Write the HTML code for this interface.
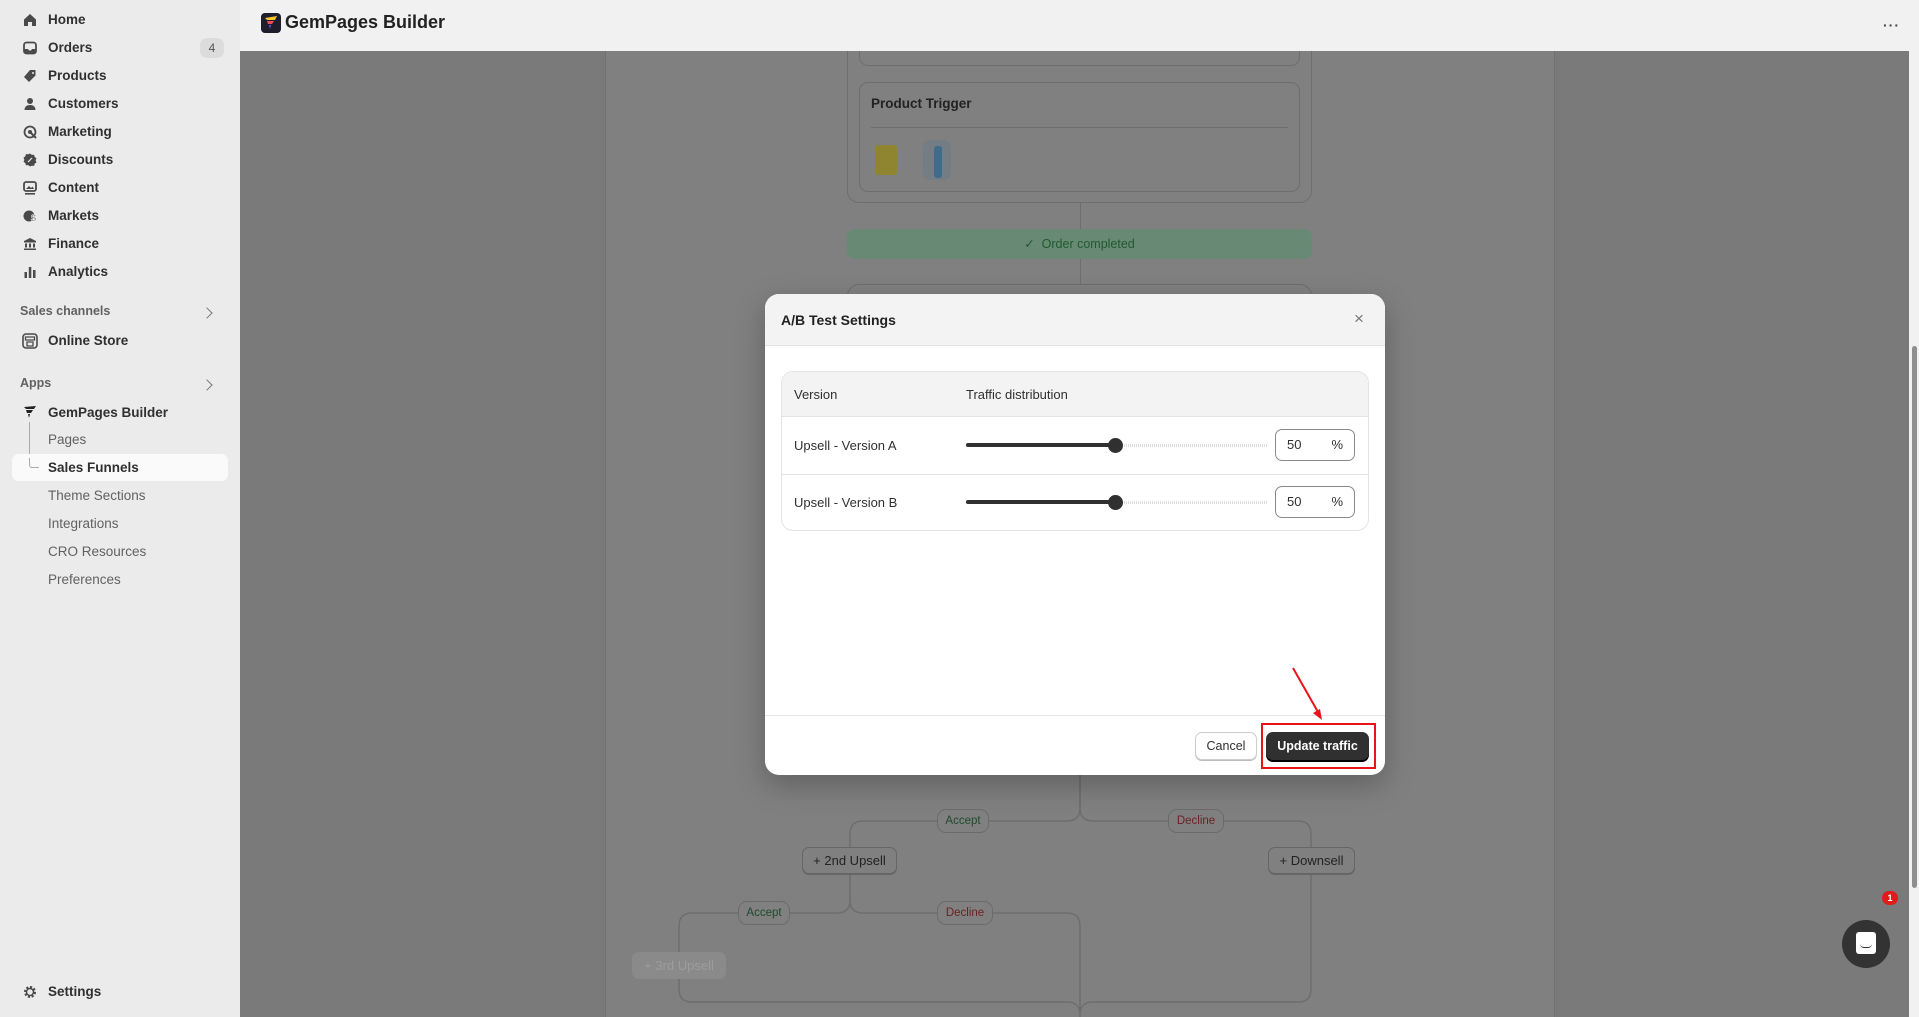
<!DOCTYPE html>
<html><head><meta charset="utf-8"><style>
*{box-sizing:border-box;margin:0;padding:0}
body{width:1919px;height:1017px;overflow:hidden;position:relative;font-family:"Liberation Sans",sans-serif;background:#7a7a7a;color:#303030}
.sb{position:absolute;left:0;top:0;width:240px;height:1017px;background:#ebebeb;z-index:5}
.it{position:absolute;left:48px;font-size:13.5px;font-weight:600;color:#303030;line-height:16px}
.sub{font-weight:500;color:#616161}
.ic{position:absolute;left:23px;width:14px;height:14px}
.sec{position:absolute;left:20px;font-size:12.5px;font-weight:600;color:#616161}
.chev{position:absolute;left:203px;width:8px;height:8px;border-right:1.5px solid #777;border-top:1.5px solid #777;transform:rotate(45deg)}
.hd{position:absolute;left:240px;top:0;width:1679px;height:51px;background:#f1f1f1;z-index:5}
.abs{position:absolute}
.pill{position:absolute;height:24px;border:1px solid #6b6b6b;border-radius:9px;background:#808080;font-size:11.5px;display:flex;align-items:center;justify-content:center}
.btn{position:absolute;height:27px;border:1px solid #666;border-radius:7px;background:#808080;font-size:13px;display:flex;align-items:center;justify-content:center;color:#222;box-shadow:0 1px 0 #666}
.modal{position:absolute;left:765px;top:294px;width:620px;height:481px;background:#fff;border-radius:14px;overflow:hidden;box-shadow:0 10px 30px rgba(0,0,0,.25);z-index:6}
</style></head><body>
<div class="sb">
<svg class="ic" style="top:13px" viewBox="0 0 14 14"><path d="M1 6.5L7 1l6 5.5V13H9V9H5v4H1z" fill="#4a4a4a"/></svg>
<div class="it" style="top:12px">Home</div>
<svg class="ic" style="top:41px" viewBox="0 0 14 14"><rect x="1" y="1.5" width="12" height="11" rx="2.5" fill="none" stroke="#4a4a4a" stroke-width="1.8"/><path d="M1.5 8h3.5l1 1.5h2L9 8h3.5v4h-11z" fill="#4a4a4a"/></svg>
<div class="it" style="top:40px">Orders</div>
<div class="abs" style="left:200px;top:38px;width:24px;height:20px;border-radius:7px;background:#dcdcdc;font-size:12px;color:#555;text-align:center;line-height:20px">4</div>
<svg class="ic" style="top:69px" viewBox="0 0 14 14"><path d="M7 1h5.5v5.5L6 13 1 8z" fill="#4a4a4a"/><circle cx="10" cy="4" r="1" fill="#ebebeb"/></svg>
<div class="it" style="top:68px">Products</div>
<svg class="ic" style="top:97px" viewBox="0 0 14 14"><circle cx="7" cy="4" r="3" fill="#4a4a4a"/><path d="M1.5 13c0-3.5 2.5-5 5.5-5s5.5 1.5 5.5 5z" fill="#4a4a4a"/></svg>
<div class="it" style="top:96px">Customers</div>
<svg class="ic" style="top:125px" viewBox="0 0 14 14"><circle cx="7" cy="7" r="5.5" fill="none" stroke="#4a4a4a" stroke-width="1.8"/><circle cx="7" cy="7" r="2" fill="#4a4a4a"/><path d="M8 8l5 5" stroke="#4a4a4a" stroke-width="2"/></svg>
<div class="it" style="top:124px">Marketing</div>
<svg class="ic" style="top:153px" viewBox="0 0 14 14"><path d="M7 .5l1.8 1.4 2.3-.2.5 2.2 1.9 1.3-.9 2.1.9 2.1-1.9 1.3-.5 2.2-2.3-.2L7 13.5 5.2 12.1l-2.3.2-.5-2.2L.5 8.8 1.4 6.7.5 4.6l1.9-1.3.5-2.2 2.3.2z" fill="#4a4a4a"/><path d="M5 9l4-4" stroke="#ebebeb" stroke-width="1.2"/></svg>
<div class="it" style="top:152px">Discounts</div>
<svg class="ic" style="top:181px" viewBox="0 0 14 14"><rect x="1" y="1" width="12" height="9" rx="2" fill="none" stroke="#4a4a4a" stroke-width="1.8"/><path d="M3 8l3-3 2 2 1.5-1.5L11 8z" fill="#4a4a4a"/><rect x="2" y="12" width="10" height="1.6" fill="#4a4a4a"/></svg>
<div class="it" style="top:180px">Content</div>
<svg class="ic" style="top:209px" viewBox="0 0 14 14"><circle cx="6" cy="7" r="5.5" fill="#4a4a4a"/><text x="8" y="12" font-size="9" fill="#4a4a4a" font-weight="bold" stroke="#ebebeb" stroke-width=".6">$</text></svg>
<div class="it" style="top:208px">Markets</div>
<svg class="ic" style="top:237px" viewBox="0 0 14 14"><path d="M7 1l6 3v1.5H1V4z M2 6.5h2v4H2z M6 6.5h2v4H6z M10 6.5h2v4h-2z M1 11.5h12V13H1z" fill="#4a4a4a"/></svg>
<div class="it" style="top:236px">Finance</div>
<svg class="ic" style="top:265px" viewBox="0 0 14 14"><rect x="1.5" y="7" width="2.5" height="6" fill="#4a4a4a"/><rect x="5.8" y="2" width="2.5" height="11" fill="#4a4a4a"/><rect x="10" y="5" width="2.5" height="8" fill="#4a4a4a"/></svg>
<div class="it" style="top:264px">Analytics</div>
<div class="sec" style="top:304px">Sales channels</div><div class="chev" style="top:309px"></div>
<svg class="ic" style="top:333px;width:16px;height:16px;left:22px" viewBox="0 0 16 16"><rect x="1" y="1" width="14" height="14" rx="3" fill="none" stroke="#4a4a4a" stroke-width="1.6"/><path d="M3.5 4h9v3h-9z M5 9h6v4H5z" fill="none" stroke="#4a4a4a" stroke-width="1.3"/></svg>
<div class="it" style="top:333px">Online Store</div>
<div class="sec" style="top:376px">Apps</div><div class="chev" style="top:381px"></div>
<svg class="ic" style="top:405px" viewBox="0 0 14 14"><path d="M1 2l12-1-2 3H3z M3 5h7l-2 3H4z M5 9h2l-1 4z" fill="#222"/></svg>
<div class="it" style="top:405px">GemPages Builder</div>
<div class="abs" style="left:29px;top:422px;width:1px;height:46px;background:#aaa"></div>
<div class="abs" style="left:12px;top:454px;width:216px;height:27px;border-radius:7px;background:#fafafa"></div>
<div class="abs" style="left:29px;top:458px;width:10px;height:10px;border-left:1px solid #aaa;border-bottom:1px solid #aaa;border-radius:0 0 0 3px"></div>
<div class="it sub" style="top:432px">Pages</div>
<div class="it" style="top:460px">Sales Funnels</div>
<div class="it sub" style="top:488px">Theme Sections</div>
<div class="it sub" style="top:516px">Integrations</div>
<div class="it sub" style="top:544px">CRO Resources</div>
<div class="it sub" style="top:572px">Preferences</div>
<svg class="ic" style="top:985px" viewBox="0 0 14 14"><circle cx="7" cy="7" r="4.5" fill="none" stroke="#4a4a4a" stroke-width="3" stroke-dasharray="2 1.5"/><circle cx="7" cy="7" r="3.5" fill="none" stroke="#4a4a4a" stroke-width="1.5"/></svg>
<div class="it" style="top:984px">Settings</div>
</div>
<div class="hd">
<div class="abs" style="left:21px;top:13px;width:20px;height:20px;border-radius:4px;background:#1d1d2b"></div>
<svg class="abs" style="left:24px;top:16px" width="14" height="14" viewBox="0 0 14 14"><path d="M1 2l12-2-2 4H3z" fill="#f7c62f"/><path d="M3 5h7l-2 3H4z" fill="#f04e4e"/><path d="M5 9h2l-1 4z" fill="#6a5cf0"/></svg>
<div class="abs" style="left:45px;top:12px;font-size:18px;font-weight:600;color:#222">GemPages Builder</div>
<div class="abs" style="left:1643px;top:23px;font-size:14px;letter-spacing:1px;color:#444;font-weight:bold;line-height:4px">&middot;&middot;&middot;</div>
</div>
<!-- canvas -->
<div class="abs" style="left:605px;top:51px;width:950px;height:966px;background:#808080;border-left:1px solid #707070;border-right:1px solid #707070"></div>
<div class="abs" style="left:847px;top:20px;width:465px;height:183px;border:1px solid #6e6e6e;border-radius:12px;background:#808080"></div>
<div class="abs" style="left:859px;top:20px;width:441px;height:46px;border:1px solid #6e6e6e;border-radius:9px"></div>
<div class="abs" style="left:859px;top:82px;width:441px;height:110px;border:1px solid #6e6e6e;border-radius:9px"></div>
<div class="abs" style="left:871px;top:96px;font-size:13.5px;font-weight:600;color:#222">Product Trigger</div>
<div class="abs" style="left:871px;top:127px;width:417px;height:1px;background:#6e6e6e"></div>
<div class="abs" style="left:875px;top:145px;width:22px;height:30px;background:#8f8530;border-radius:3px"></div>
<div class="abs" style="left:923px;top:140px;width:28px;height:40px;background:#747c84;border-radius:7px"></div>
<div class="abs" style="left:934px;top:146px;width:8px;height:32px;background:#3e6c8a;border-radius:3px"></div>
<div class="abs" style="left:1080px;top:203px;width:1px;height:26px;background:#6e6e6e"></div>
<div class="abs" style="left:847px;top:229px;width:465px;height:30px;background:#688a74;border-radius:8px;font-size:12.5px;color:#1f5a2e;text-align:center;line-height:30px;font-weight:500">✓&nbsp; Order completed</div>
<div class="abs" style="left:1080px;top:259px;width:1px;height:26px;background:#6e6e6e"></div>
<div class="abs" style="left:847px;top:284px;width:465px;height:30px;border:1px solid #6e6e6e;border-radius:12px"></div>
<svg class="abs" style="left:0;top:0" width="1919" height="1017"><g fill="none" stroke="#6e6e6e" stroke-width="1.5">
<path d="M1080 775V808q0 13-13 13H863q-13 0-13 13V847"/>
<path d="M1080 775V808q0 13 13 13H1298q13 0 13 13V847"/>
<path d="M850 873V900q0 13-13 13H692q-13 0-13 13V952"/>
<path d="M850 873V900q0 13 13 13H1067q13 0 13 13V1017"/>
<path d="M679 978V989q0 13 13 13H1067q13 0 13 13"/>
<path d="M1311 873V989q0 13-13 13H1093q-13 0-13 13"/></g></svg>
<div class="pill" style="left:937px;top:809px;width:52px;color:#1f4a2a">Accept</div>
<div class="pill" style="left:1168px;top:809px;width:56px;color:#6a2222">Decline</div>
<div class="btn" style="left:802px;top:847px;width:95px">+ 2nd Upsell</div>
<div class="btn" style="left:1268px;top:847px;width:87px">+ Downsell</div>
<div class="pill" style="left:738px;top:901px;width:52px;color:#1f4a2a">Accept</div>
<div class="pill" style="left:937px;top:901px;width:56px;color:#6a2222">Decline</div>
<div class="btn" style="left:632px;top:952px;width:94px;border:none;background:#8a8a8a;color:#9d9d9d;box-shadow:none">+ 3rd Upsell</div>
<!-- modal -->
<div class="modal">
<div class="abs" style="left:0;top:0;width:620px;height:52px;background:#f3f3f3;border-bottom:1px solid #e3e3e3"></div>
<div class="abs" style="left:16px;top:18px;font-size:14px;font-weight:600;color:#222">A/B Test Settings</div>
<div class="abs" style="left:589px;top:15px;font-size:17px;color:#777">×</div>
<div class="abs" style="left:16px;top:77px;width:588px;height:160px;border:1px solid #e3e3e3;border-radius:12px;overflow:hidden">
<div class="abs" style="left:0;top:0;width:588px;height:45px;background:#f3f3f3;border-bottom:1px solid #e3e3e3"></div>
<div class="abs" style="left:12px;top:15px;font-size:13px;color:#303030">Version</div>
<div class="abs" style="left:184px;top:15px;font-size:13px;color:#303030">Traffic distribution</div>
<div class="abs" style="left:0;top:102px;width:588px;height:1px;background:#e3e3e3"></div>
<div class="abs" style="left:12px;top:66px;font-size:13px;color:#303030">Upsell - Version A</div>
<div class="abs" style="left:12px;top:123px;font-size:13px;color:#303030">Upsell - Version B</div>
<div class="abs" style="left:184px;top:72px;width:302px;height:3px;background:repeating-linear-gradient(90deg,#ddd 0 1px,#fff 1px 2px)"></div>
<div class="abs" style="left:184px;top:71px;width:150px;height:4px;background:#303030;border-radius:2px"></div>
<div class="abs" style="left:326px;top:66px;width:15px;height:15px;border-radius:50%;background:#303030"></div>
<div class="abs" style="left:184px;top:129px;width:302px;height:3px;background:repeating-linear-gradient(90deg,#ddd 0 1px,#fff 1px 2px)"></div>
<div class="abs" style="left:184px;top:128px;width:150px;height:4px;background:#303030;border-radius:2px"></div>
<div class="abs" style="left:326px;top:123px;width:15px;height:15px;border-radius:50%;background:#303030"></div>
<div class="abs" style="left:493px;top:57px;width:80px;height:32px;border:1px solid #8a8a8a;border-radius:7px;font-size:13px;line-height:30px;padding-left:11px">50<span style="position:absolute;right:11px">%</span></div>
<div class="abs" style="left:493px;top:114px;width:80px;height:32px;border:1px solid #8a8a8a;border-radius:7px;font-size:13px;line-height:30px;padding-left:11px">50<span style="position:absolute;right:11px">%</span></div>
</div>
<div class="abs" style="left:0;top:421px;width:620px;height:1px;background:#e3e3e3"></div>
<div class="abs" style="left:430px;top:438px;width:62px;height:28px;border:1px solid #ccc;border-radius:7px;font-size:12.5px;font-weight:500;text-align:center;line-height:26px;box-shadow:0 1px 0 #bbb">Cancel</div>
<div class="abs" style="left:501px;top:438px;width:103px;height:28px;background:#303030;border-radius:7px;font-size:12.5px;font-weight:600;color:#fff;text-align:center;line-height:28px;box-shadow:0 2px 0 #000">Update traffic</div>
<div class="abs" style="left:496px;top:429px;width:115px;height:46px;border:2.5px solid #e8141a"></div>
<svg class="abs" style="left:0;top:0" width="620" height="481"><path d="M528 374L553 418" stroke="#e8141a" stroke-width="2"/><path d="M557 426l-9-7 7-4z" fill="#e8141a"/></svg>
</div>
<!-- scrollbar -->
<div class="abs" style="left:1909px;top:51px;width:10px;height:966px;background:#f1f1f1;z-index:5"></div>
<div class="abs" style="left:1912px;top:346px;width:5px;height:542px;background:#8f8f8f;border-radius:3px;z-index:6"></div>
<!-- chat -->
<div class="abs" style="left:1842px;top:920px;width:48px;height:48px;border-radius:50%;background:#333"></div>
<div class="abs" style="left:1856px;top:932px;width:20px;height:22px;border-radius:3px;background:#fff"></div>
<div class="abs" style="left:1860px;top:944px;width:12px;height:4px;border-bottom:1.5px solid #333;border-radius:0 0 6px 6px"></div>
<div class="abs" style="left:1882px;top:891px;width:16px;height:14px;border-radius:7px;background:#e01b1b;color:#fff;font-size:9px;font-weight:bold;text-align:center;line-height:14px">1</div>
</body></html>
